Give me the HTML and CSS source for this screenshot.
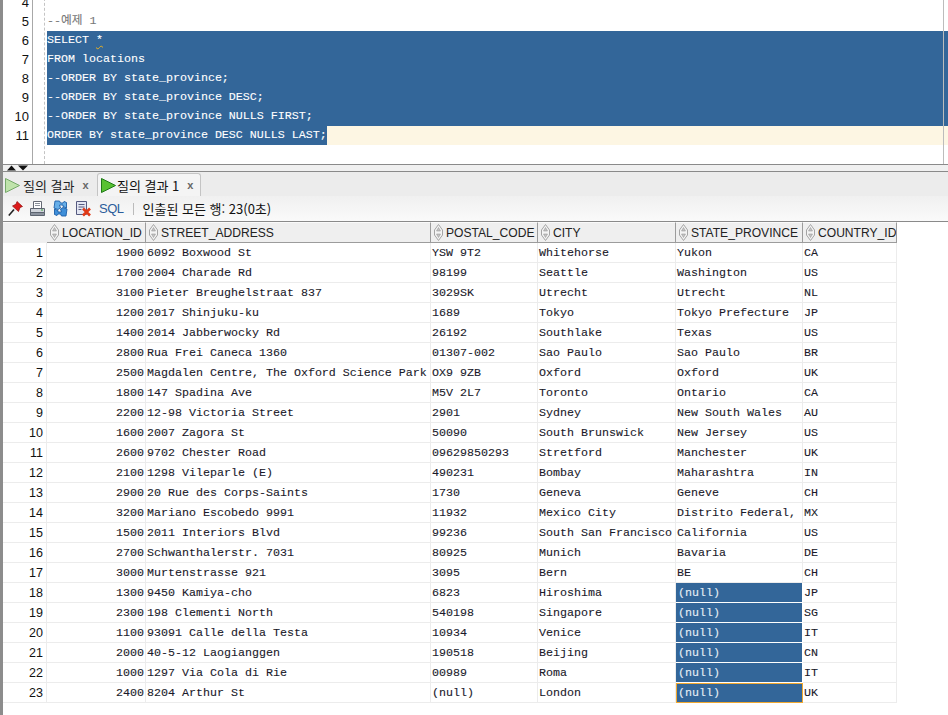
FILE: index.html
```html
<!DOCTYPE html>
<html lang="ko">
<head>
<meta charset="utf-8">
<title>질의 결과</title>
<link rel="stylesheet" href="styles.css">
</head>
<body>
<svg class="defs" width="0" height="0" aria-hidden="true">
  <symbol id="sorter" viewBox="0 0 9 17">
    <path d="M4.500 .5 8.500 6v5l-4 5.500L.5 11V6z" fill="#f4f4f4" stroke="#a4a4a4"/>
    <path d="M4.500 3.500 6.500 7h-4zM4.500 13.500 2.500 10h4z" fill="#c4c4c4" stroke="#8e8e8e" stroke-width=".5"/>
  </symbol>
</svg>
<section class="editor">
  <div class="gutter">
    <div class="ln">4</div><div class="ln">5</div><div class="ln">6</div><div class="ln">7</div><div class="ln">8</div><div class="ln">9</div><div class="ln">10</div><div class="ln">11</div>
  </div>
  <div class="code">
    <div class="cl"></div>
    <div class="cl comment">--예제 1</div>
    <div class="cl sel">SELECT <span class="squig">*</span></div>
    <div class="cl sel">FROM locations</div>
    <div class="cl sel">--ORDER BY state_province;</div>
    <div class="cl sel">--ORDER BY state_province DESC;</div>
    <div class="cl sel">--ORDER BY state_province NULLS FIRST;</div>
    <div class="cl cur"><span class="selpart">ORDER BY state_province DESC NULLS LAST;</span></div>
  </div>
  <div class="edge"></div>
</section>
<div class="splitter">
  <svg class="arrows" width="22" height="6" viewBox="0 0 22 6"><path d="M0 5.500 4.500 .5 9 5.500z" fill="#111"/><path d="M11 .5h10l-5 5z" fill="#111"/></svg>
</div>
<div class="tabs">
  <div class="tab">
    <svg class="play" width="17" height="17" viewBox="0 0 17 17"><path d="M1.500 1.500 15.500 8.500 1.500 15.500z" fill="#bfe3ab" stroke="#76a96a"/></svg>
    <span class="tl">질의 결과</span><span class="x">x</span>
  </div>
  <div class="tab active">
    <svg class="play" width="17" height="17" viewBox="0 0 17 17"><path d="M1.500 1.500 15.500 8.500 1.500 15.500z" fill="#58c232" stroke="#1f7a17"/></svg>
    <span class="tl">질의 결과 1</span><span class="x">x</span>
  </div>
</div>
<div class="toolbar">
  <svg class="ti" width="15" height="15" viewBox="0 0 15 15"><path d="M9 .5 14.500 5.500 12 6.500 10.500 10.500 4.500 5 8 3.200z" fill="#dc1a1a" stroke="#8e0c0c" stroke-width=".7"/><path d="M6 8.500 .8 14.500" stroke="#222" stroke-width="1.600"/></svg>
  <svg class="ti" width="17" height="17" viewBox="0 0 17 17"><path d="M4.500 1.500h8v7h-8z" fill="#fff" stroke="#666a74"/><path d="M6 3.500h5M6 5.500h5" stroke="#8d929c"/><path d="M1.500 8.500h14v4h-14z" fill="#cfd3da" stroke="#5d6470"/><path d="M1.500 12.500h14v3h-14z" fill="#8b929e" stroke="#5d6470"/><path d="M12 10h2" stroke="#3aa33a"/></svg>
  <svg class="ti" width="17" height="17" viewBox="0 0 17 17"><path d="M3 1h4.500l1 2H11l1-1.500 2.500 1v5.500L11 6.500V5H7.500l1 3-2.500 1.500L2 8z" fill="#66aee8" stroke="#1c5fa8" stroke-width=".9"/><path d="M14 16H9.500l-1-2H6l-1 1.500L2.500 14.500V9L6 10.500V12h3.500l-1-3L11 7.500 15 9z" fill="#3f8fd9" stroke="#1c5fa8" stroke-width=".9"/></svg>
  <svg class="ti" width="17" height="17" viewBox="0 0 17 17"><path d="M1.500 1.500h10v13h-10z" fill="#e3e6f2" stroke="#565a80"/><path d="M3.500 4.500h6M3.500 7h6M3.500 9.500h3" stroke="#565a80"/><path d="M8 8.500l7 7M15 8.500l-7 7" stroke="#e03a18" stroke-width="2.600"/></svg>
  <span class="sql">SQL</span>
  <span class="tsep"></span>
  <span class="status">인출된 모든 행: 23(0초)</span>
</div>
<div class="gridwrap">
  <table class="grid">
    <colgroup>
      <col class="c0"><col class="c1"><col class="c2"><col class="c3"><col class="c4"><col class="c5"><col class="c6">
    </colgroup>
    <thead>
      <tr>
        <th class="corner"></th>
        <th><svg class="sort"><use href="#sorter"/></svg>LOCATION_ID</th>
        <th><svg class="sort"><use href="#sorter"/></svg>STREET_ADDRESS</th>
        <th><svg class="sort"><use href="#sorter"/></svg>POSTAL_CODE</th>
        <th><svg class="sort"><use href="#sorter"/></svg>CITY</th>
        <th><svg class="sort"><use href="#sorter"/></svg>STATE_PROVINCE</th>
        <th><svg class="sort"><use href="#sorter"/></svg>COUNTRY_ID</th>
      </tr>
    </thead>
    <tbody>
      <tr><td class="rn">1</td><td class="num">1900</td><td>6092 Boxwood St</td><td>YSW 9T2</td><td>Whitehorse</td><td>Yukon</td><td>CA</td></tr>
      <tr><td class="rn">2</td><td class="num">1700</td><td>2004 Charade Rd</td><td>98199</td><td>Seattle</td><td>Washington</td><td>US</td></tr>
      <tr><td class="rn">3</td><td class="num">3100</td><td>Pieter Breughelstraat 837</td><td>3029SK</td><td>Utrecht</td><td>Utrecht</td><td>NL</td></tr>
      <tr><td class="rn">4</td><td class="num">1200</td><td>2017 Shinjuku-ku</td><td>1689</td><td>Tokyo</td><td>Tokyo Prefecture</td><td>JP</td></tr>
      <tr><td class="rn">5</td><td class="num">1400</td><td>2014 Jabberwocky Rd</td><td>26192</td><td>Southlake</td><td>Texas</td><td>US</td></tr>
      <tr><td class="rn">6</td><td class="num">2800</td><td>Rua Frei Caneca 1360</td><td>01307-002</td><td>Sao Paulo</td><td>Sao Paulo</td><td>BR</td></tr>
      <tr><td class="rn">7</td><td class="num">2500</td><td>Magdalen Centre, The Oxford Science Park</td><td>OX9 9ZB</td><td>Oxford</td><td>Oxford</td><td>UK</td></tr>
      <tr><td class="rn">8</td><td class="num">1800</td><td>147 Spadina Ave</td><td>M5V 2L7</td><td>Toronto</td><td>Ontario</td><td>CA</td></tr>
      <tr><td class="rn">9</td><td class="num">2200</td><td>12-98 Victoria Street</td><td>2901</td><td>Sydney</td><td>New South Wales</td><td>AU</td></tr>
      <tr><td class="rn">10</td><td class="num">1600</td><td>2007 Zagora St</td><td>50090</td><td>South Brunswick</td><td>New Jersey</td><td>US</td></tr>
      <tr><td class="rn">11</td><td class="num">2600</td><td>9702 Chester Road</td><td>09629850293</td><td>Stretford</td><td>Manchester</td><td>UK</td></tr>
      <tr><td class="rn">12</td><td class="num">2100</td><td>1298 Vileparle (E)</td><td>490231</td><td>Bombay</td><td>Maharashtra</td><td>IN</td></tr>
      <tr><td class="rn">13</td><td class="num">2900</td><td>20 Rue des Corps-Saints</td><td>1730</td><td>Geneva</td><td>Geneve</td><td>CH</td></tr>
      <tr><td class="rn">14</td><td class="num">3200</td><td>Mariano Escobedo 9991</td><td>11932</td><td>Mexico City</td><td>Distrito Federal,</td><td>MX</td></tr>
      <tr><td class="rn">15</td><td class="num">1500</td><td>2011 Interiors Blvd</td><td>99236</td><td>South San Francisco</td><td>California</td><td>US</td></tr>
      <tr><td class="rn">16</td><td class="num">2700</td><td>Schwanthalerstr. 7031</td><td>80925</td><td>Munich</td><td>Bavaria</td><td>DE</td></tr>
      <tr><td class="rn">17</td><td class="num">3000</td><td>Murtenstrasse 921</td><td>3095</td><td>Bern</td><td>BE</td><td>CH</td></tr>
      <tr><td class="rn">18</td><td class="num">1300</td><td>9450 Kamiya-cho</td><td>6823</td><td>Hiroshima</td><td class="hl">(null)</td><td>JP</td></tr>
      <tr><td class="rn">19</td><td class="num">2300</td><td>198 Clementi North</td><td>540198</td><td>Singapore</td><td class="hl">(null)</td><td>SG</td></tr>
      <tr><td class="rn">20</td><td class="num">1100</td><td>93091 Calle della Testa</td><td>10934</td><td>Venice</td><td class="hl">(null)</td><td>IT</td></tr>
      <tr><td class="rn">21</td><td class="num">2000</td><td>40-5-12 Laogianggen</td><td>190518</td><td>Beijing</td><td class="hl">(null)</td><td>CN</td></tr>
      <tr><td class="rn">22</td><td class="num">1000</td><td>1297 Via Cola di Rie</td><td>00989</td><td>Roma</td><td class="hl">(null)</td><td>IT</td></tr>
      <tr><td class="rn">23</td><td class="num">2400</td><td>8204 Arthur St</td><td>(null)</td><td>London</td><td class="hl focus">(null)</td><td>UK</td></tr>
    </tbody>
  </table>
</div>
</body>
</html>
```

FILE: styles.css
```css
* { box-sizing: border-box; }
html, body { margin: 0; padding: 0; }
body {
  width: 948px;
  height: 715px;
  overflow: hidden;
  background: #fff;
  font-family: "Liberation Mono", "Noto Sans CJK KR", monospace;
  color: #111;
  border-left: 3px solid #8c8c8c;
}
.defs { position: absolute; }

/* editor */
.editor {
  position: relative;
  display: flex;
  height: 165px;
  margin-left: -1px;
  border-bottom: 1px solid #8a8a8a;
  overflow: hidden;
  font-size: 11.67px;
  -webkit-text-stroke: 0.1px;
}
.gutter {
  width: 31px;
  flex: none;
  margin-top: -7px;
  border-right: 1px solid #a8a8a8;
  font-family: "Liberation Sans", sans-serif;
  font-size: 13px;
  text-align: right;
  padding-right: 3px;
  -webkit-text-stroke: 0;
}
.ln { height: 19px; line-height: 19px; }
.code {
  flex: 1;
  margin-top: -7px;
  margin-left: 11px;
  padding-left: 2px;
  border-left: 1px dashed #c4c4c4;
}
.edge {
  position: absolute;
  top: 0;
  bottom: 0;
  left: 941px;
  width: 1px;
  background: #bcbcbc;
}
.cl { height: 19px; line-height: 19px; white-space: pre; }
.comment { color: #777; }
.sel { background: #336699; color: #fff; }
.cur { background: #fdf6e3; }
.selpart { display: inline-block; height: 19px; background: #336699; color: #fff; }
.squig {
  text-decoration: underline wavy #e8b020 1px;
  text-underline-offset: 2px;
}

/* splitter */
.splitter {
  height: 7px;
  margin-left: -1px;
  background: #f0f0f0;
  border-bottom: 1px solid #8a8a8a;
  display: flex;
  align-items: center;
}
.arrows { margin-left: 5px; }

/* tabs */
.tabs {
  display: flex;
  align-items: flex-end;
  height: 24px;
  background: #ececec;
  font-family: "Noto Sans CJK KR", sans-serif;
  font-size: 13px;
}
.tab {
  display: flex;
  align-items: center;
  width: 94px;
  height: 22px;
  padding-left: 1px;
  gap: 2px;
  color: #222;
}
.tab.active {
  width: 104px;
  height: 23px;
  background: #f4f4f4;
  border: 1px solid #c4c4c4;
  border-bottom: 0;
  border-radius: 3px 3px 0 0;
  padding-left: 2px;
  gap: 0;
  color: #111;
}
.tl { white-space: nowrap; }
.x { margin-left: 6px; color: #666; font-family: "Liberation Sans", sans-serif; font-size: 11px; font-weight: 700; }
.active .x { margin-left: 8px; }

/* toolbar */
.toolbar {
  display: flex;
  align-items: center;
  height: 26px;
  padding-left: 5px;
  gap: 6px;
  background: linear-gradient(#f0f0f0, #fafafa);
  border-bottom: 1px solid #8a8a8a;
  font-family: "Noto Sans CJK KR", sans-serif;
  font-size: 13px;
}
.ti { flex: none; }
.sql { font-family: "Liberation Sans", sans-serif; font-size: 13px; letter-spacing: -0.5px; color: #2b5d9b; margin-left: 1px; }
.tsep { width: 1px; height: 12px; background: #bbb; margin: 0 3px; }
.status { color: #111; white-space: nowrap; }

/* grid */
.gridwrap { padding: 0; }
.grid {
  table-layout: fixed;
  width: 894px;
  border-collapse: separate;
  border-spacing: 0;
  font-size: 11.67px;
  -webkit-text-stroke: 0.1px;
}
.c0 { width: 44px; }
.c1 { width: 99px; }
.c2 { width: 285px; }
.c3 { width: 107px; }
.c4 { width: 138px; }
.c5 { width: 127px; }
.c6 { width: 94px; }
.grid th {
  height: 21px;
  padding: 0 0 0 3px;
  background: #efefef;
  border-top: 1px solid #fafafa;
  border-right: 1px solid #9c9c9c;
  border-bottom: 1px solid #9c9c9c;
  font-family: "Liberation Sans", sans-serif;
  font-weight: 400;
  font-size: 12.1px;
  text-align: left;
  white-space: nowrap;
  overflow: hidden;
  color: #222;
  -webkit-text-stroke: 0;
}
.grid th.corner { border-right: 0; border-bottom: 0; }
.sort {
  width: 9px;
  height: 17px;
  margin-right: 3px;
  vertical-align: -4px;
}
.grid td {
  height: 20px;
  padding: 0 0 0 1px;
  border-right: 1px solid #ececec;
  border-bottom: 1px solid #ececec;
  white-space: nowrap;
  overflow: hidden;
  color: #1a1a2a;
}
.grid td.rn {
  font-family: "Liberation Sans", sans-serif;
  font-size: 12.5px;
  text-align: right;
  padding-right: 3px;
  color: #111;
  -webkit-text-stroke: 0;
}
.grid td.num { text-align: right; padding-right: 1px; }
.grid td.hl {
  background: #336699;
  color: #e6eef6;
  border-bottom: 1px solid #fff;
  border-right-color: #fff;
  padding-left: 2px;
}
.grid td.hl.focus { outline: 1px solid #f0a830; outline-offset: -1px; }
```
